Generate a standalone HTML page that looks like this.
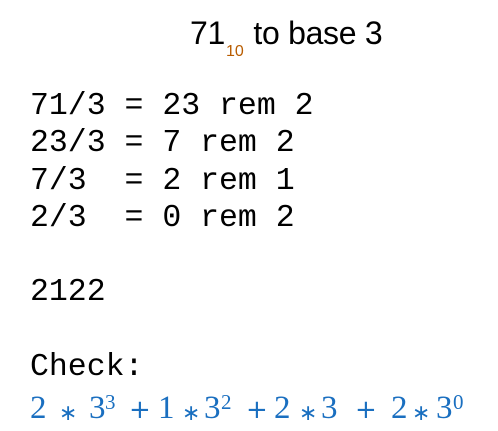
<!DOCTYPE html>
<html><head><meta charset="utf-8"><style>
html,body{margin:0;padding:0;background:#fff;width:498px;height:431px;overflow:hidden;position:relative}
.t{position:absolute;left:190px;top:15px;font-family:"Liberation Sans",sans-serif;font-size:32px;color:#000;white-space:nowrap;letter-spacing:-0.3px}
.t sub{font-size:16px;color:#b85c00;vertical-align:-12px;letter-spacing:0;margin:0 1px 0 1px}
pre{position:absolute;left:30px;margin:0;font-family:"Liberation Mono","Courier New",monospace;font-size:31.5px;line-height:37.3px;color:#000}
.m{position:absolute;font-family:"Liberation Serif",serif;font-size:33px;color:#1a6fc0;top:392px;line-height:32px}
.s{font-size:21px;top:386px}
.a{font-size:22px;top:398px;font-family:"DejaVu Sans",sans-serif}
.p{font-size:26px;top:394px;font-family:"DejaVu Sans",sans-serif}
</style></head><body>
<div class="t">71<sub>10</sub> to base 3</div>
<pre style="top:88px">71/3 = 23 rem 2
23/3 = 7 rem 2
7/3  = 2 rem 1
2/3  = 0 rem 2

2122

Check:</pre>
<span class="m" style="left:30px">2</span>
<span class="m a" style="left:59px">∗</span>
<span class="m" style="left:89px">3</span>
<span class="m s" style="left:105px">3</span>
<span class="m p" style="left:129px">+</span>
<span class="m" style="left:158px">1</span>
<span class="m a" style="left:182px">∗</span>
<span class="m" style="left:204px">3</span>
<span class="m s" style="left:221px">2</span>
<span class="m p" style="left:246px">+</span>
<span class="m" style="left:274px">2</span>
<span class="m a" style="left:299px">∗</span>
<span class="m" style="left:321px">3</span>
<span class="m p" style="left:355px">+</span>
<span class="m" style="left:391px">2</span>
<span class="m a" style="left:412px">∗</span>
<span class="m" style="left:436px">3</span>
<span class="m s" style="left:453px">0</span>
</body></html>
